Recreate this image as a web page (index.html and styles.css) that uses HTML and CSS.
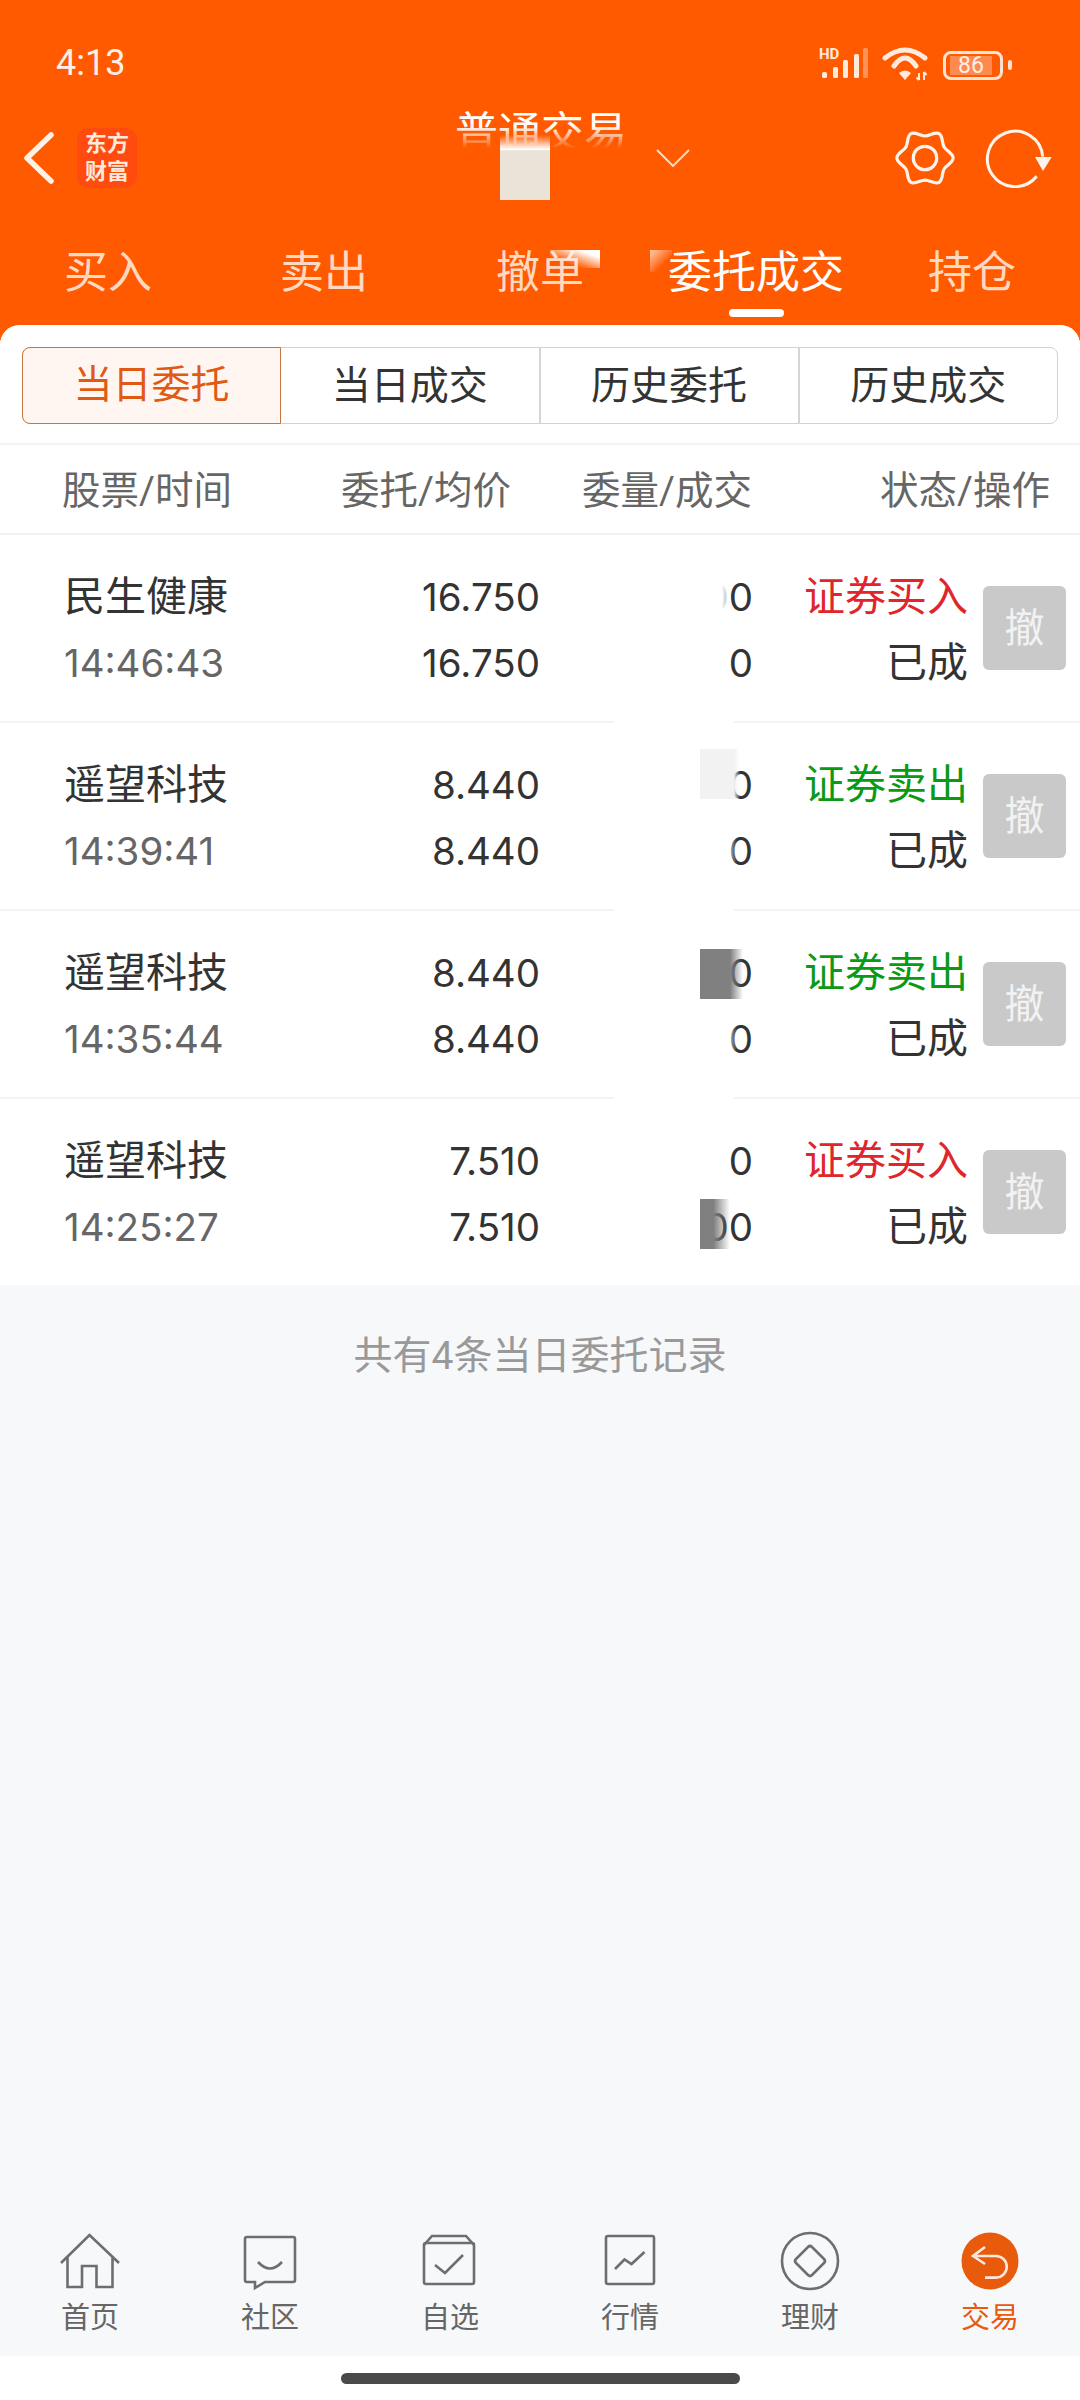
FILE: index.html
```html
<!DOCTYPE html>
<html lang="zh-CN">
<head>
  <meta charset="UTF-8">
  <meta name="viewport" content="width=device-width, initial-scale=1.0">
  <title>普通交易</title>
  <link rel="stylesheet" href="styles.css">
</head>
<body>
  <!-- Orange header -->
  <header class="header">
    <div class="status">
      <span class="clock">4:13</span>
      <div class="status-icons">
        <svg class="signal" width="52" height="38" viewBox="0 0 52 38">
          <text x="1" y="15" class="hd">HD</text>
          <rect x="4" y="28" width="5" height="6" rx="1.5"/>
          <rect x="15" y="23" width="5" height="11" rx="1.5"/>
          <rect x="25" y="16" width="5" height="18" rx="1.5"/>
          <rect x="36" y="10" width="5" height="24" rx="1.5"/>
          <rect x="45" y="4" width="5" height="30" rx="1.5" opacity="0.4"/>
        </svg>
        <svg class="wifi" width="50" height="38" viewBox="0 0 50 38">
          <path d="M5 14Q25 -2 45 14" fill="none" stroke="#ffeadd" stroke-width="5" stroke-linecap="round"/>
          <path d="M14 22Q25 6 36 22" fill="none" stroke="#ffeadd" stroke-width="5" stroke-linecap="round"/>
          <path d="M19 29Q25 24 31 29L25 36Z" fill="#ffeadd"/>
          <path d="M39 29V36M36.500 33.500L39 36M44 36V28M44 28L46.500 31" fill="none" stroke="#ffeadd" stroke-width="2"/>
        </svg>
        <div class="battery">
          <div class="battery-body"><span class="battery-fill">86</span></div>
          <div class="battery-cap"></div>
        </div>
      </div>
    </div>

    <div class="nav">
      <div class="nav-left">
        <svg class="back" width="32" height="54" viewBox="0 0 32 54">
          <polyline points="28,4 4,27 28,50" fill="none" stroke="#fff1e6" stroke-width="5.500" stroke-linecap="round" stroke-linejoin="round"/>
        </svg>
        <div class="logo">东方<br>财富</div>
      </div>
      <div class="title-box">
        <div class="title">普通交易</div>
        <div class="title-fade"></div>
        <div class="title-patch"></div>
      </div>
      <div class="nav-right">
        <svg class="title-arrow" width="34" height="18" viewBox="0 0 34 18">
          <polyline points="1,1 17,17 33,1" fill="none" stroke="#ffd9c2" stroke-width="2"/>
        </svg>
        <!-- settings gear -->
        <svg class="gear" width="60" height="60" viewBox="-2 -2 64 64">
          <path d="M60 30C60 35 52.850 37.420 50.350 41.750C47.850 46.080 49.330 53.500 45 56C40.670 58.500 35 53.500 30 53.500C25 53.500 19.330 58.500 15 56C10.670 53.500 12.150 46.080 9.650 41.750C7.150 37.420 0 35 0 30C0 25 7.150 22.580 9.650 18.250C12.150 13.920 10.670 6.500 15 4C19.330 1.500 25 6.500 30 6.500C35 6.500 40.670 1.500 45 4C49.330 6.500 47.850 13.920 50.350 18.250C52.850 22.580 60 25 60 30Z" fill="none" stroke="#fff4ec" stroke-width="3.400"/>
          <circle cx="30" cy="30" r="12.500" fill="none" stroke="#fff4ec" stroke-width="3.400"/>
        </svg>
        <!-- refresh -->
        <svg class="refresh" width="68" height="60" viewBox="0 0 68 60">
          <path d="M51.700 48.300A27.700 27.700 0 1 1 57.700 28.600" fill="none" stroke="#fff4ec" stroke-width="3"/>
          <polygon points="50,29 66.700,29 58,43" fill="#fff4ec"/>
        </svg>
      </div>
    </div>

    <nav class="tabs">
      <div class="tab">买入</div>
      <div class="tab">卖出</div>
      <div class="tab">撤单</div>
      <div class="tab tab-on">委托成交</div>
      <div class="tab">持仓</div>
      <div class="tab-glare"></div>
      <div class="tab-glare2"></div>
    </nav>
  </header>

  <main class="panel">
    <div class="segment-wrap">
      <div class="segment">
        <div class="seg seg-on">当日委托</div>
        <div class="seg">当日成交</div>
        <div class="seg">历史委托</div>
        <div class="seg">历史成交</div>
      </div>
    </div>

    <div class="table-head">
      <div class="th th-name">股票/时间</div>
      <div class="th th-price">委托/均价</div>
      <div class="th th-qty">委量/成交</div>
      <div class="th th-state">状态/操作</div>
    </div>

    <!-- Orders -->
    <div class="row">
      <div class="col col-name">
        <div class="line">民生健康</div>
        <div class="line num muted">14:46:43</div>
      </div>
      <div class="col col-price">
        <div class="line num">16.750</div>
        <div class="line num">16.750</div>
      </div>
      <div class="col col-qty">
        <div class="line num">00<i class="mask mask-white"></i></div>
        <div class="line num">0</div>
      </div>
      <div class="col col-state">
        <div class="line buy">证券买入</div>
        <div class="line">已成</div>
      </div>
      <div class="cancel">撤</div>
      <i class="gap-wash"></i>
    </div>

    <div class="row">
      <div class="col col-name">
        <div class="line">遥望科技</div>
        <div class="line num muted">14:39:41</div>
      </div>
      <div class="col col-price">
        <div class="line num">8.440</div>
        <div class="line num">8.440</div>
      </div>
      <div class="col col-qty">
        <div class="line num">0<i class="mask mask-pale"></i></div>
        <div class="line num">0<i class="mask mask-soft"></i></div>
      </div>
      <div class="col col-state">
        <div class="line sell">证券卖出</div>
        <div class="line">已成</div>
      </div>
      <div class="cancel">撤</div>
      <i class="gap-wash"></i>
    </div>

    <div class="row">
      <div class="col col-name">
        <div class="line">遥望科技</div>
        <div class="line num muted">14:35:44</div>
      </div>
      <div class="col col-price">
        <div class="line num">8.440</div>
        <div class="line num">8.440</div>
      </div>
      <div class="col col-qty">
        <div class="line num">0<i class="mask mask-grey"></i></div>
        <div class="line num">0<i class="mask mask-soft"></i></div>
      </div>
      <div class="col col-state">
        <div class="line sell">证券卖出</div>
        <div class="line">已成</div>
      </div>
      <div class="cancel">撤</div>
      <i class="gap-wash"></i>
    </div>

    <div class="row row-last">
      <div class="col col-name">
        <div class="line">遥望科技</div>
        <div class="line num muted">14:25:27</div>
      </div>
      <div class="col col-price">
        <div class="line num">7.510</div>
        <div class="line num">7.510</div>
      </div>
      <div class="col col-qty">
        <div class="line num">0</div>
        <div class="line num">00<i class="mask mask-grey2"></i></div>
      </div>
      <div class="col col-state">
        <div class="line buy">证券买入</div>
        <div class="line">已成</div>
      </div>
      <div class="cancel">撤</div>
    </div>

    <div class="list-end">共有4条当日委托记录</div>
  </main>

  <!-- Bottom tab bar -->
  <footer class="bottom">
    <div class="bar-item">
      <svg width="60" height="60" viewBox="0 0 60 60" class="bar-icon">
        <path d="M1 32L29.500 4L59 32M7.500 25V56H22V35H36.500V56H52.500V25"/>
      </svg>
      <span>首页</span>
    </div>
    <div class="bar-item">
      <svg width="60" height="60" viewBox="0 0 60 60" class="bar-icon">
        <path d="M7 6H53Q55 6 55 8V49Q55 51 53 51H25L15 57V51H7Q5 51 5 49V8Q5 6 7 6Z"/>
        <path d="M18 31Q30 44 42 31"/>
      </svg>
      <span>社区</span>
    </div>
    <div class="bar-item">
      <svg width="60" height="60" viewBox="0 0 60 60" class="bar-icon">
        <path d="M6 12H52Q54 12 54 14V51Q54 53 52 53H6Q4 53 4 51V14Q4 12 6 12Z"/>
        <path d="M4 14L12 5H46L54 14"/>
        <path d="M15 34L25 42L43 24"/>
      </svg>
      <span>自选</span>
    </div>
    <div class="bar-item">
      <svg width="60" height="60" viewBox="0 0 60 60" class="bar-icon">
        <rect x="6" y="5" width="48" height="48" rx="2"/>
        <path d="M15 38L24.500 28.500L31.500 33L44.500 21"/>
      </svg>
      <span>行情</span>
    </div>
    <div class="bar-item">
      <svg width="60" height="60" viewBox="0 0 60 60" class="bar-icon">
        <circle cx="30" cy="30" r="28"/>
        <path d="M28 16Q30 14 32 16L44 28Q46 30 44 32L32 44Q30 46 28 44L16 32Q14 30 16 28Z"/>
      </svg>
      <span>理财</span>
    </div>
    <div class="bar-item bar-on">
      <svg width="60" height="60" viewBox="0 0 60 60">
        <circle cx="30" cy="30" r="28.500" fill="#e85a0c"/>
        <path d="M25 16L13 25L25 33M13 25H36A10.800 10.800 0 0 1 36 46.600H25" fill="none" stroke="#ffe9dc" stroke-width="2.600"/>
      </svg>
      <span>交易</span>
    </div>
  </footer>

  <div class="home-zone"><div class="home-pill"></div></div>
</body>
</html>
```

FILE: styles.css
```css
* {
  box-sizing: border-box;
}
body {
  margin: 0;
  width: 1080px;
  height: 2400px;
  display: flex;
  flex-direction: column;
  overflow: hidden;
  background: #f7f8fa;
  color: #333;
  font-family: Roboto, "Noto Sans CJK SC", sans-serif;
}

/* header */
.header {
  height: 345px;
  flex: none;
  background: #ff5a00;
  color: #fff;
}
.status {
  height: 100px;
  padding: 44px 0 0 56px;
  display: flex;
  justify-content: space-between;
  align-items: flex-start;
}
.clock {
  font-size: 36px;
  line-height: 38px;
  color: #fff1e6;
}
.status-icons {
  display: flex;
  padding-right: 68px;
}
.signal rect {
  fill: #ffeadd;
}
.hd {
  font-size: 15px;
  font-weight: 700;
  fill: #ffeadd;
}
.wifi {
  margin-left: 10px;
}
.battery {
  margin: 4px 0 0 13px;
  display: flex;
  align-items: center;
}
.battery-body {
  width: 60px;
  height: 29px;
  border: 3px solid #ffe3d2;
  border-radius: 8px;
  padding: 2px 8px 2px 4px;
}
.battery-fill {
  display: block;
  height: 19px;
  background: #ff8a50;
  color: #ffeee4;
  font-size: 23px;
  line-height: 19px;
  text-align: center;
}
.battery-cap {
  width: 4px;
  height: 10px;
  margin-left: 5px;
  border-radius: 2px;
  background: #ffe3d2;
}

.nav {
  height: 110px;
  padding-top: 6px;
  display: grid;
  grid-template-columns: 1fr 170px 1fr;
}
.nav-left {
  display: flex;
  align-items: center;
  padding-left: 23px;
}
.logo {
  width: 60px;
  height: 60px;
  margin-left: 22px;
  background: #ff4a10;
  border-radius: 12px;
  color: #ffe9dc;
  font-size: 22px;
  font-weight: 700;
  line-height: 28px;
  padding-top: 2px;
  text-align: center;
}
.title-box {
  position: relative;
  height: 104px;
}
.title {
  font-size: 43px;
  line-height: 54px;
  text-align: center;
  white-space: nowrap;
}
/* lower edge of the title dissolves into the header */
.title-fade {
  position: absolute;
  left: -6px;
  right: -6px;
  top: 20px;
  height: 30px;
  background: linear-gradient(to bottom, rgba(255, 90, 0, 0), #ff5a00 75%);
}
.title-patch {
  position: absolute;
  left: 45px;
  top: 29px;
  width: 50px;
  height: 65px;
  background: linear-gradient(to bottom, rgba(255, 255, 255, 0), #fff 22%, #fff 23%, #ece3d8 24%);
}
.nav-right {
  display: flex;
  align-items: center;
  padding: 0 27px 0 31px;
}
.gear {
  margin-left: auto;
}
.refresh {
  margin-left: 30px;
}

.tabs {
  position: relative;
  height: 115px;
  display: flex;
}
.tab {
  flex: 1;
  position: relative;
  padding-top: 33px;
  font-size: 44px;
  line-height: 60px;
  text-align: center;
  color: #ffd9c2;
}
.tab-on {
  color: #fff;
}
.tab-on::after {
  content: "";
  position: absolute;
  left: 81px;
  bottom: 8px;
  width: 55px;
  height: 8px;
  border-radius: 4px;
  background: #fff;
}
.tab-glare {
  position: absolute;
  left: 550px;
  top: 40px;
  width: 50px;
  height: 18px;
  background: linear-gradient(200deg, #fff 20%, rgba(255, 255, 255, 0) 70%);
}
.tab-glare2 {
  position: absolute;
  left: 650px;
  top: 40px;
  width: 22px;
  height: 22px;
  background: linear-gradient(135deg, rgba(255, 255, 255, 0.7), rgba(255, 255, 255, 0) 65%);
}

/* white sheet */
.panel {
  flex: 1;
  margin-top: -20px;
  position: relative;
  display: flex;
  flex-direction: column;
  border-radius: 20px 20px 0 0;
  background: #f7f8fa;
  overflow: hidden;
}
.segment-wrap {
  height: 120px;
  padding: 22px 22px 0;
  background: #fff;
  border-bottom: 2px solid #f4f4f4;
}
.segment {
  height: 77px;
  display: flex;
  border: 1px solid #d2d2d2;
  border-radius: 8px;
}
.seg {
  flex: 1;
  margin: -1px 0;
  border-left: 2px solid #d5d5d5;
  font-size: 39px;
  line-height: 79px;
  text-align: center;
  color: #333;
}
.seg-on {
  margin-left: -1px;
  border: 1px solid #c9743c;
  border-radius: 8px 0 0 8px;
  background: #fff6f1;
  color: #e05a14;
  line-height: 75px;
}
.seg-on + .seg {
  border-left: 0;
}

.table-head {
  height: 90px;
  flex: none;
  display: flex;
  padding: 0 30px 0 62px;
  background: #fff;
  border-bottom: 2px solid #f2f2f2;
  font-size: 38.500px;
  line-height: 91px;
  color: #666;
}
.th {
  text-align: right;
}
.th-name {
  width: 238px;
  text-align: left;
}
.th-price {
  width: 211px;
}
.th-qty {
  width: 241px;
}
.th-state {
  width: 298px;
}

.row {
  position: relative;
  height: 188px;
  flex: none;
  display: flex;
  align-items: center;
  padding-left: 64px;
  background: #fff;
  border-bottom: 2px solid #f4f4f4;
  font-size: 41px;
}
.row-last {
  height: 186px;
  border-bottom: 0;
}
.line {
  position: relative;
  height: 66px;
  line-height: 66px;
  white-space: nowrap;
}
/* digits run wider than the CJK labels at the same size */
.num {
  font-family: Inter, "Noto Sans CJK SC", sans-serif;
  font-size: 38.500px;
}
.col {
  padding-top: 3px;
  text-align: right;
}
.col-name {
  width: 236px;
  text-align: left;
}
.col-price {
  width: 240px;
}
.col-qty {
  width: 213px;
}
.col-state {
  width: 215px;
}
.muted {
  color: #666;
}
.buy {
  color: #e0262b;
}
.sell {
  color: #0a9a14;
}
.cancel {
  width: 83px;
  height: 84px;
  margin-left: 15px;
  border-radius: 6px;
  background: #c9c9c9;
  color: #f2f2f2;
  font-size: 40px;
  line-height: 86px;
  text-align: center;
}

/* blanked out parts of the quantity column */
.mask {
  position: absolute;
  display: block;
}
.mask-white {
  right: 24px;
  top: 8px;
  width: 50px;
  height: 50px;
  background: linear-gradient(to right, #fff 85%, rgba(255, 255, 255, 0.6));
}
.mask-soft {
  right: 16px;
  top: 8px;
  width: 12px;
  height: 50px;
  background: linear-gradient(to right, #fff, rgba(255, 255, 255, 0));
}
.mask-pale {
  right: 13px;
  top: -3px;
  width: 40px;
  height: 50px;
  background: linear-gradient(to right, #f2f2f2 85%, rgba(242, 242, 242, 0));
}
.mask-grey {
  right: 10px;
  top: 9px;
  width: 43px;
  height: 50px;
  background: linear-gradient(to right, #808080 70%, rgba(128, 128, 128, 0));
}
.mask-grey2 {
  right: 23px;
  top: 5px;
  width: 30px;
  height: 50px;
  background: linear-gradient(to right, #808080 45%, rgba(128, 128, 128, 0));
}
.gap-wash {
  position: absolute;
  left: 614px;
  bottom: -2px;
  width: 120px;
  height: 2px;
  background: #fff;
}

.list-end {
  padding-top: 48px;
  font-size: 39px;
  line-height: 46px;
  text-align: center;
  color: #999;
}

/* bottom bar */
.bottom {
  height: 125px;
  flex: none;
  display: flex;
  background: #f7f8fa;
}
.bar-item {
  flex: 1;
  display: flex;
  flex-direction: column;
  align-items: center;
  font-size: 29px;
  line-height: 40px;
  color: #666;
}
.bar-item span {
  margin-top: 7px;
}
.bar-on {
  color: #e85a0c;
}
.bar-icon {
  fill: none;
  stroke: #6e6e6e;
  stroke-width: 2.600;
}
.home-zone {
  height: 44px;
  flex: none;
  padding-top: 17px;
  background: #fff;
}
.home-pill {
  width: 399px;
  height: 11px;
  margin: 0 auto;
  border-radius: 6px;
  background: #4a4a4a;
}
```
